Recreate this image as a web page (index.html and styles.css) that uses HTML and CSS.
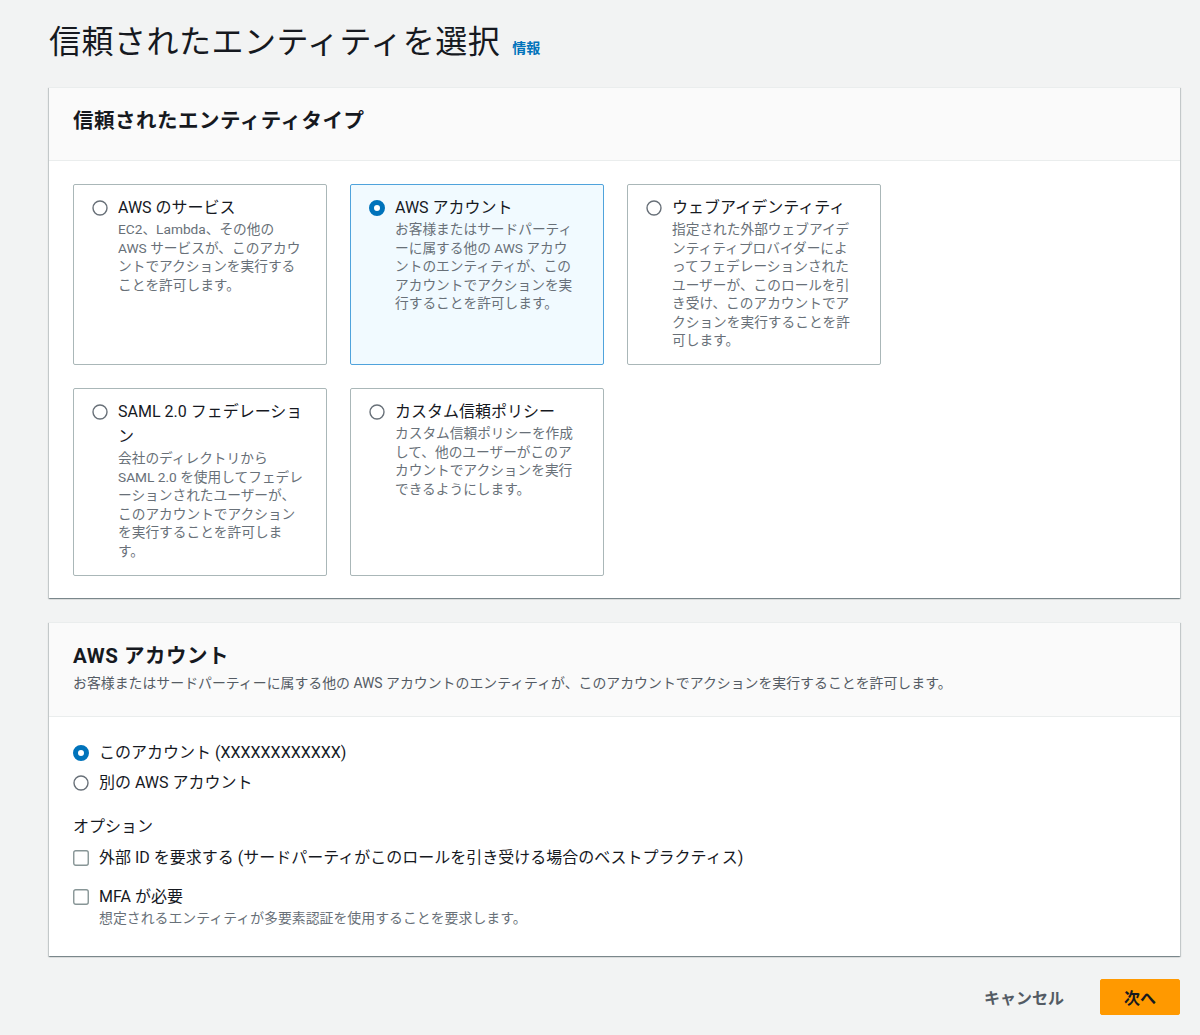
FILE: index.html
```html
<!DOCTYPE html>
<html lang="ja">
<head>
<meta charset="utf-8">
<title>信頼されたエンティティを選択</title>
<link rel="stylesheet" href="styles.css">
</head>
<body>
<div class="page">
  <div class="title-row">
    <h1 class="page-title">信頼されたエンティティを選択</h1>
    <a class="info-link">情報</a>
  </div>

  <section class="panel">
    <div class="panel-header">
      <h2 class="panel-title">信頼されたエンティティタイプ</h2>
    </div>
    <div class="tiles">
      <div class="tile">
        <svg class="radio" viewBox="0 0 16 16"><circle cx="8" cy="8" r="7" fill="#fff" stroke="#687078" stroke-width="1.4"/></svg>
        <div class="tile-text">
          <div class="tile-label">AWS のサービス</div>
          <div class="tile-desc">EC2、Lambda、その他の AWS サービスが、このアカウントでアクションを実行することを許可します。</div>
        </div>
      </div>
      <div class="tile selected">
        <svg class="radio" viewBox="0 0 16 16"><circle cx="8" cy="8" r="5.5" fill="#fff" stroke="#0073bb" stroke-width="5"/></svg>
        <div class="tile-text">
          <div class="tile-label">AWS アカウント</div>
          <div class="tile-desc">お客様またはサードパーティーに属する他の AWS アカウントのエンティティが、このアカウントでアクションを実行することを許可します。</div>
        </div>
      </div>
      <div class="tile">
        <svg class="radio" viewBox="0 0 16 16"><circle cx="8" cy="8" r="7" fill="#fff" stroke="#687078" stroke-width="1.4"/></svg>
        <div class="tile-text">
          <div class="tile-label">ウェブアイデンティティ</div>
          <div class="tile-desc">指定された外部ウェブアイデンティティプロバイダーによってフェデレーションされたユーザーが、このロールを引き受け、このアカウントでアクションを実行することを許可します。</div>
        </div>
      </div>
      <div class="tile">
        <svg class="radio" viewBox="0 0 16 16"><circle cx="8" cy="8" r="7" fill="#fff" stroke="#687078" stroke-width="1.4"/></svg>
        <div class="tile-text">
          <div class="tile-label">SAML 2.0 フェデレーション</div>
          <div class="tile-desc">会社のディレクトリから SAML 2.0 を使用してフェデレーションされたユーザーが、このアカウントでアクションを実行することを許可します。</div>
        </div>
      </div>
      <div class="tile">
        <svg class="radio" viewBox="0 0 16 16"><circle cx="8" cy="8" r="7" fill="#fff" stroke="#687078" stroke-width="1.4"/></svg>
        <div class="tile-text">
          <div class="tile-label">カスタム信頼ポリシー</div>
          <div class="tile-desc">カスタム信頼ポリシーを作成して、他のユーザーがこのアカウントでアクションを実行できるようにします。</div>
        </div>
      </div>
    </div>
  </section>

  <section class="panel panel-account">
    <div class="panel-header">
      <h2 class="panel-title">AWS アカウント</h2>
      <p class="panel-desc">お客様またはサードパーティーに属する他の AWS アカウントのエンティティが、このアカウントでアクションを実行することを許可します。</p>
    </div>
    <div class="panel-body">
      <div class="choice">
        <svg class="radio" viewBox="0 0 16 16"><circle cx="8" cy="8" r="5.5" fill="#fff" stroke="#0073bb" stroke-width="5"/></svg>
        <span class="choice-label">このアカウント (XXXXXXXXXXXX)</span>
      </div>
      <div class="choice choice-second">
        <svg class="radio" viewBox="0 0 16 16"><circle cx="8" cy="8" r="7" fill="#fff" stroke="#687078" stroke-width="1.4"/></svg>
        <span class="choice-label">別の AWS アカウント</span>
      </div>

      <div class="options-title">オプション</div>
      <div class="choice check-first">
        <svg class="checkbox" viewBox="0 0 16 16"><rect x="0.75" y="0.75" width="14.5" height="14.5" rx="2" fill="#fff" stroke="#879596" stroke-width="1.4"/></svg>
        <span class="choice-label">外部 ID を要求する (サードパーティがこのロールを引き受ける場合のベストプラクティス)</span>
      </div>
      <div class="choice check-second">
        <svg class="checkbox" viewBox="0 0 16 16"><rect x="0.75" y="0.75" width="14.5" height="14.5" rx="2" fill="#fff" stroke="#879596" stroke-width="1.4"/></svg>
        <div>
          <div class="choice-label">MFA が必要</div>
          <div class="choice-desc">想定されるエンティティが多要素認証を使用することを要求します。</div>
        </div>
      </div>
    </div>
  </section>

  <div class="actions">
    <button class="btn btn-link">キャンセル</button>
    <button class="btn btn-primary">次へ</button>
  </div>
</div>
</body>
</html>
```

FILE: styles.css
```css
* {
  box-sizing: border-box;
}

html, body {
  margin: 0;
  padding: 0;
  background: #f2f3f3;
}

body {
  font-family: Roboto, "Noto Sans CJK JP", sans-serif;
  color: #16191f;
}

.page {
  padding: 22px 20px 0 49px;
}

.title-row {
  display: flex;
  align-items: baseline;
  gap: 12px;
  margin-bottom: 25px;
}

.page-title {
  margin: 0;
  font-size: 32px;
  line-height: 40px;
  font-weight: 400;
  letter-spacing: 0.5px;
  color: #16191f;
}

.info-link {
  font-size: 14px;
  font-weight: 700;
  color: #0073bb;
}

.panel {
  background: #fff;
  border-top: 1px solid #eaeded;
  box-shadow: 0 1px 1px 0 rgba(0, 28, 36, 0.3), 1px 1px 1px 0 rgba(0, 28, 36, 0.15), -1px 1px 1px 0 rgba(0, 28, 36, 0.15);
}

.panel-account {
  margin-top: 24px;
}

.panel-header {
  background: #fafafa;
  border-bottom: 1px solid #eaeded;
  padding: 19px 23px 24px 24px;
}

.panel-title {
  margin: 0;
  font-size: 20.5px;
  line-height: 29px;
  font-weight: 700;
  letter-spacing: 0.5px;
  color: #16191f;
}

.panel-desc {
  margin: 3px 0 0;
  font-size: 13.9px;
  line-height: 18.5px;
  color: #545b64;
}

.tiles {
  display: grid;
  grid-template-columns: repeat(3, 254px);
  gap: 23px;
  padding: 23px 23px 22px 24px;
}

.tile {
  display: flex;
  gap: 10px;
  align-items: flex-start;
  border: 1px solid #aab7b8;
  border-radius: 2px;
  padding: 10px 22px 14.5px 18px;
  background: #fff;
}

.tile.selected {
  background: #f1faff;
  border-color: #4fa3dc;
}

.radio {
  flex: none;
  width: 16px;
  height: 16px;
  margin-top: 4.5px;
}

.checkbox {
  flex: none;
  width: 16px;
  height: 16px;
  margin-top: 4.5px;
}

.tile-text {
  flex: 1;
  min-width: 0;
}

.tile-label {
  font-size: 16px;
  line-height: 25px;
  color: #16191f;
}

.tile-desc {
  font-size: 13.7px;
  line-height: 18.5px;
  color: #687078;
}

.panel-body {
  padding: 23px 24px 28px 24px;
}

.choice {
  display: flex;
  align-items: flex-start;
  gap: 10px;
}

.choice-second {
  margin-top: 5px;
}

.choice-label {
  font-size: 16px;
  line-height: 25px;
  color: #16191f;
}

.choice-desc {
  font-size: 13.9px;
  line-height: 18.5px;
  color: #687078;
}

.options-title {
  margin-top: 19px;
  font-size: 16px;
  line-height: 25px;
  color: #16191f;
}

.check-first {
  margin-top: 6px;
}

.check-second {
  margin-top: 14px;
}

.actions {
  display: flex;
  justify-content: flex-end;
  gap: 12px;
  margin-top: 23px;
}

.btn {
  height: 36px;
  padding: 0 23px;
  border: 1px solid transparent;
  border-radius: 2px;
  font-family: Roboto, "Noto Sans CJK JP", sans-serif;
  font-size: 16px;
  font-weight: 700;
  background: transparent;
}

.btn-link {
  color: #545b64;
}

.btn-primary {
  background: #ff9900;
  border-color: #ff9900;
  color: #16191f;
}
```
